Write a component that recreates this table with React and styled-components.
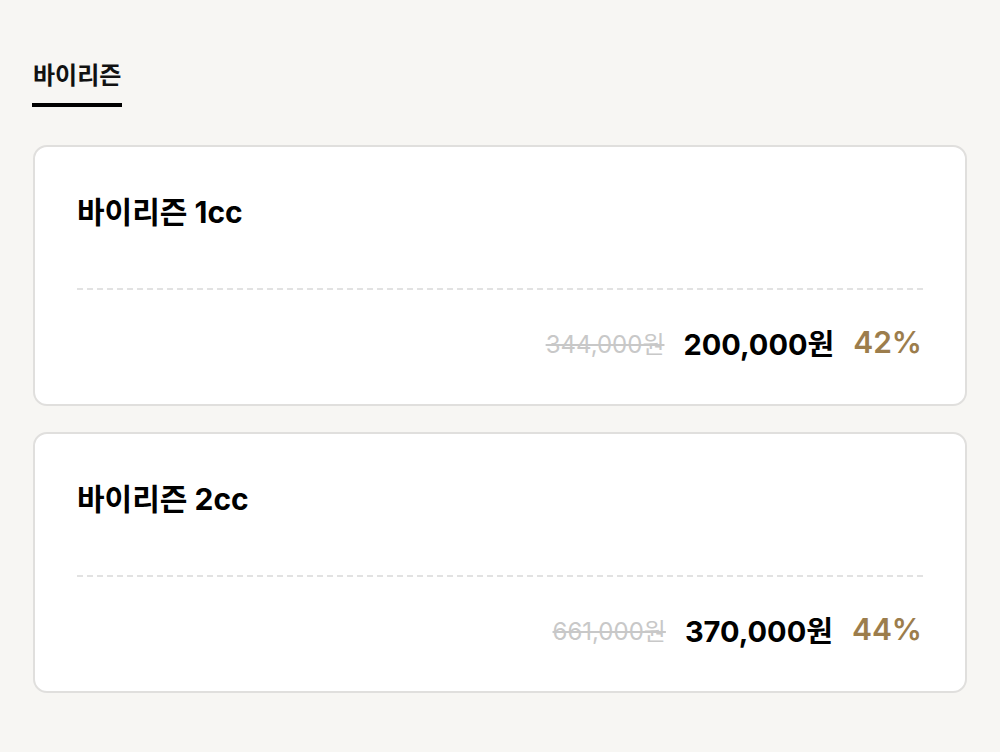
import React from "react";
import styled, { createGlobalStyle } from "styled-components";

const products = [
  { name: "바이리즌 1cc", original: "344,000원", price: "200,000원", rate: "42%" },
  { name: "바이리즌 2cc", original: "661,000원", price: "370,000원", rate: "44%" },
];

const GlobalStyle = createGlobalStyle`
  body {
    margin: 0;
    background: #f7f6f3;
    font-family: Inter, "Noto Sans CJK KR", sans-serif;
    color: #111;
  }
`;

const Page = styled.div`
  padding: 60px 33px 40px 32px;
`;

const Tabs = styled.div`
  display: flex;
  margin-bottom: 38px;
`;

const Tab = styled.div`
  font-size: 24px;
  line-height: 32px;
  font-weight: 700;
  padding: 0 1px 11px;
  border-bottom: 4px solid #000;
`;

const List = styled.div`
  display: flex;
  flex-direction: column;
  gap: 26px;
  padding-left: 1px;
`;

const Card = styled.div`
  background: #fff;
  border: 2px solid #e0dfdd;
  border-radius: 14px;
  padding: 46px 42px 42px;
`;

const Title = styled.h3`
  margin: 0;
  font-size: 30px;
  line-height: 38px;
  font-weight: 700;
  color: #000;
`;

const Divider = styled.hr`
  margin: 57px 0 32px;
  border: 0;
  border-top: 2px dashed #e2e2e2;
`;

const PriceRow = styled.div`
  display: flex;
  justify-content: flex-end;
  align-items: center;
  height: 40px;
`;

const Original = styled.span`
  font-size: 24px;
  color: #c8c8c8;
  text-decoration: line-through;
  margin-right: 19px;
`;

const Price = styled.span`
  font-size: 29px;
  font-weight: 700;
  color: #000;
  margin-right: 19px;
`;

const Rate = styled.span`
  font-size: 30px;
  font-weight: 600;
  color: #9c7d4c;
  margin-right: 1px;
`;

export default function App() {
  return (
    <>
      <GlobalStyle />
      <Page>
        <Tabs>
          <Tab>바이리즌</Tab>
        </Tabs>
        <List>
          {products.map((item) => (
            <Card key={item.name}>
              <Title>{item.name}</Title>
              <Divider />
              <PriceRow>
                <Original>{item.original}</Original>
                <Price>{item.price}</Price>
                <Rate>{item.rate}</Rate>
              </PriceRow>
            </Card>
          ))}
        </List>
      </Page>
    </>
  );
}
